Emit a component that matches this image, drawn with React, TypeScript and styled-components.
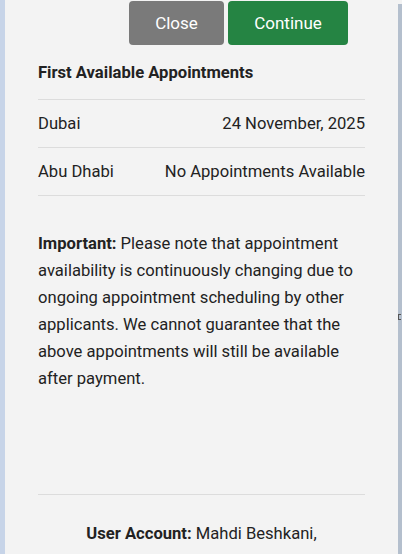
import React from "react";
import styled, { createGlobalStyle } from "styled-components";

const GlobalStyle = createGlobalStyle`
  html, body { margin: 0; padding: 0; background: #f3f3f3; }
  body { font-family: Roboto, "Noto Sans", Arial, sans-serif; color: #222; }
`;

const Page = styled.div`
  display: flex;
  width: 402px;
  height: 554px;
  overflow: hidden;
  background: #f3f3f3;
`;

const LeftRail = styled.div`
  width: 5px;
  flex: none;
  background: #c7d4e8;
`;

const RightRail = styled.div`
  width: 4px;
  flex: none;
  margin-top: 4px;
  background: #b4bfcd;
  position: relative;
`;

const Notch = styled.span`
  position: absolute;
  left: 0;
  top: 310px;
  width: 3px;
  height: 6px;
  border: 1px solid #555;
  border-right: none;
  box-sizing: border-box;
`;

const Panel = styled.main`
  flex: 1;
  padding: 0 33px 0 33px;
  background: #f3f3f3;
`;

const ButtonRow = styled.div`
  display: flex;
  justify-content: flex-end;
  gap: 4px;
  margin-top: 1px;
  padding-right: 17px;
`;

const Button = styled.button<{ $variant: "grey" | "green" }>`
  height: 44px;
  width: ${(p) => (p.$variant === "grey" ? "95px" : "120px")};
  border: none;
  border-radius: 4px;
  background: ${(p) => (p.$variant === "grey" ? "#7a7a7a" : "#258443")};
  color: #fff;
  font-family: Roboto, Arial, sans-serif;
  font-size: 17px;
  padding: 0;
`;

const Title = styled.h2`
  margin: 16px 0 14px;
  font-size: 16.6px;
  line-height: 24px;
  font-weight: 700;
  color: #222;
`;

const Table = styled.div`
  border-top: 1px solid #dcdcdc;
`;

const Row = styled.div`
  display: flex;
  justify-content: space-between;
  padding: 12px 0;
  line-height: 23px;
  font-size: 16.6px;
  border-bottom: 1px solid #dcdcdc;
  color: #222;
`;

const Note = styled.p`
  margin: 34px 0 0;
  font-size: 16.6px;
  line-height: 27px;
  color: #222;
`;

const Divider = styled.hr`
  margin: 102px 0 0;
  border: none;
  border-top: 1px solid #dcdcdc;
`;

const Account = styled.p`
  margin: 27px 0 0;
  text-align: center;
  font-size: 16.6px;
  line-height: 24px;
  color: #222;
`;

export default function App() {
  return (
    <>
      <GlobalStyle />
      <Page>
        <LeftRail />
        <Panel>
          <ButtonRow>
            <Button $variant="grey">Close</Button>
            <Button $variant="green">Continue</Button>
          </ButtonRow>
          <Title>First Available Appointments</Title>
          <Table>
            <Row>
              <span>Dubai</span>
              <span>24 November, 2025</span>
            </Row>
            <Row>
              <span>Abu Dhabi</span>
              <span>No Appointments Available</span>
            </Row>
          </Table>
          <Note>
            <strong>Important:</strong> Please note that appointment availability
            is continuously changing due to ongoing appointment scheduling by other
            applicants. We cannot guarantee that the above appointments will still
            be available after payment.
          </Note>
          <Divider />
          <Account>
            <strong>User Account:</strong> Mahdi Beshkani,
          </Account>
        </Panel>
        <RightRail>
          <Notch />
        </RightRail>
      </Page>
    </>
  );
}
